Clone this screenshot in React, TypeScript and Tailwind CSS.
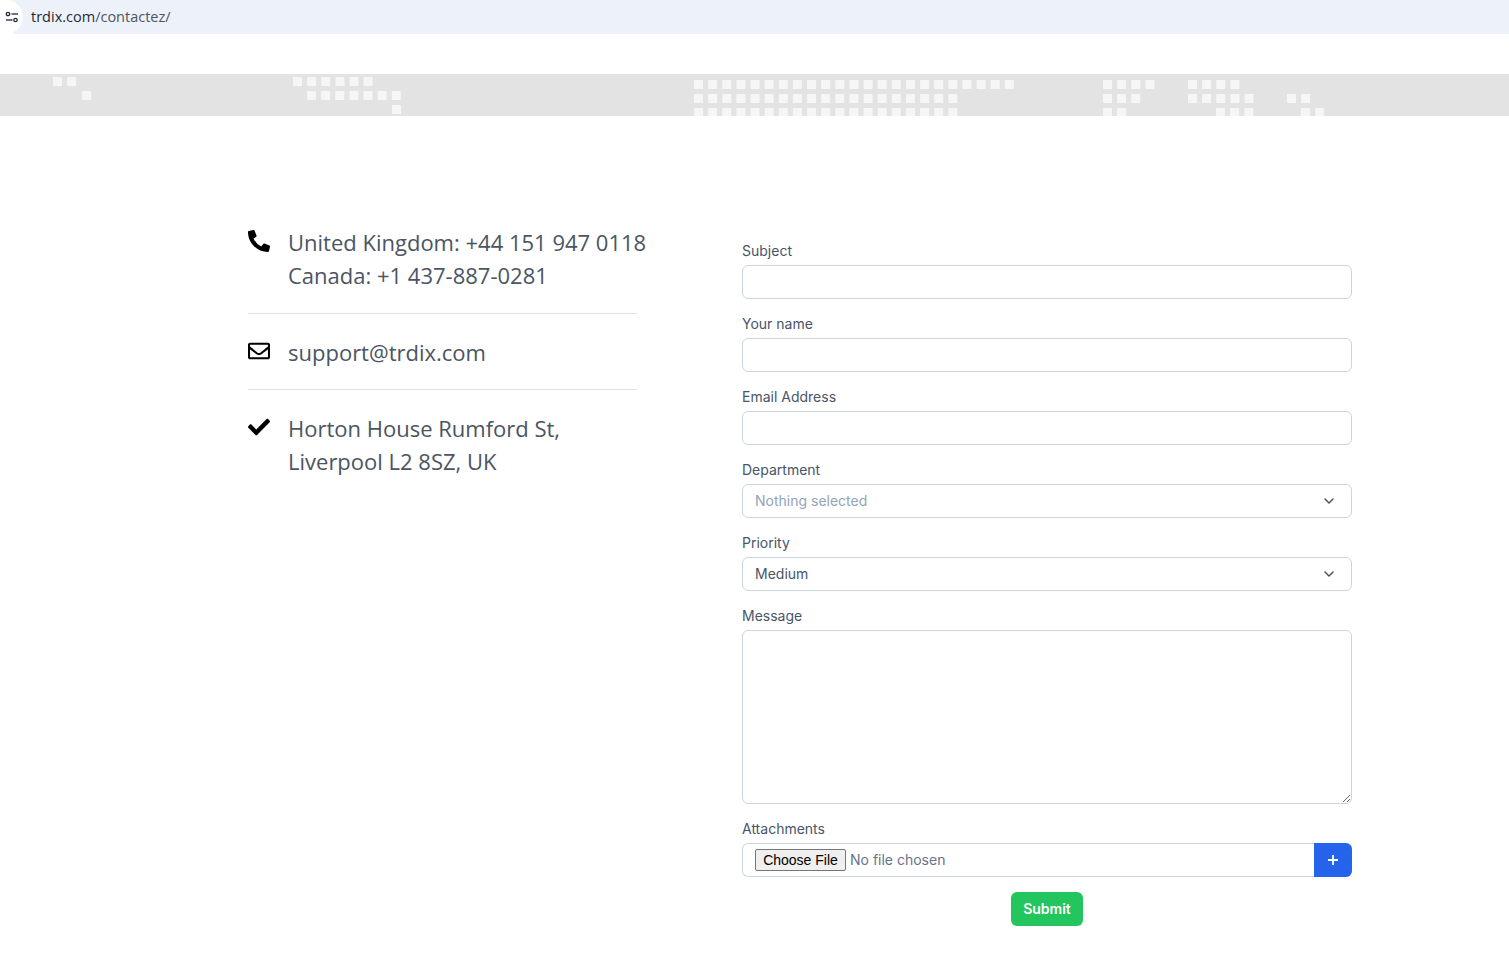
import { FaCheck, FaPhoneAlt, FaRegEnvelope } from 'react-icons/fa'

// banner pattern: [start x, y, number of squares]
const squareRuns: [number, number, number][] = [
  [53, 77, 2], [82, 91, 1],
  [293, 77, 6], [307, 91, 7], [392, 105, 1],
  [694, 80, 23], [694, 94, 19], [694, 108, 19],
  [1103, 80, 4], [1103, 94, 3], [1103, 108, 2],
  [1188, 80, 4], [1188, 94, 5], [1216, 108, 3],
  [1287, 94, 2], [1301, 108, 2],
]

const Banner = () => (
  <div className="h-[42px] bg-[#e3e3e3]">
    <svg width="1509" height="42" viewBox="0 74 1509 42" className="block">
      {squareRuns.map(([x, y, count]) =>
        Array.from({ length: count }, (_, i) => (
          <rect key={`${x}-${y}-${i}`} x={x + i * 14.13} y={y} width="9" height="9" rx="0.5" fill="#f6f6f6" />
        ))
      )}
    </svg>
  </div>
)

const AddressBar = () => (
  <div className="h-[34px] bg-[#edf2fa] flex items-center rounded-bl-[17px]">
    <div className="w-[23px] h-[34px] bg-white rounded-r-full flex items-center justify-center shrink-0">
      <svg width="14" height="12" viewBox="0 0 14 12" fill="none" stroke="#1f2937" strokeWidth="1.3">
        <circle cx="3" cy="3" r="1.7" />
        <path d="M6.5 3H13" />
        <path d="M1 9h6.5" />
        <circle cx="10.5" cy="9" r="1.7" />
      </svg>
    </div>
    <span className="ml-2 text-[14.5px] text-[#1f2937] font-['Open_Sans',sans-serif]">
      trdix.com<span className="text-[#4b5563]">/contactez/</span>
    </span>
  </div>
)

const Chevron = () => (
  <svg width="20" height="20" viewBox="0 0 20 20" fill="none" stroke="#4b5563" strokeWidth="1.5" strokeLinecap="round" strokeLinejoin="round">
    <path d="M6 8l4 4 4-4" />
  </svg>
)

const Field = ({ label, children }: { label: string; children: React.ReactNode }) => (
  <div className="mb-[15px]">
    <label className="block text-sm text-[#475569] mb-1">{label}</label>
    {children}
  </div>
)

const inputClass = 'block w-full h-[34px] bg-white border border-[#cbd5e1] rounded-md px-3 text-sm text-[#475569] focus:outline-none'

const SelectBox = ({ value, muted }: { value: string; muted?: boolean }) => (
  <button type="button" className={`${inputClass} flex items-center justify-between pr-[12px] text-left`}>
    <span className={muted ? 'text-[#94a3b8]' : 'text-[#475569]'}>{value}</span>
    <Chevron />
  </button>
)

const App = () => {
  return (
    <div className="min-h-[974px] bg-white font-['Inter',sans-serif]">
      <AddressBar />
      <div className="h-10" />
      <Banner />

      <div className="flex pl-[248px]">
        <div className="w-[389px] pt-[110px] font-['Open_Sans',sans-serif] text-[22px] leading-[33px] text-[#4b5563]">
          <div className="flex border-b border-[#e2e2e2] pb-[21px]">
            <FaPhoneAlt className="w-[22px] h-[22px] text-black mt-1 shrink-0" />
            <div className="ml-[18px] whitespace-nowrap">
              United Kingdom: +44 151 947 0118<br />
              Canada: +1 437-887-0281
            </div>
          </div>
          <div className="flex border-b border-[#e2e2e2] pt-[22px] pb-[20px]">
            <FaRegEnvelope className="w-[22px] h-[22px] text-black mt-1 shrink-0" />
            <div className="ml-[18px]">support@trdix.com</div>
          </div>
          <div className="flex pt-[22px]">
            <FaCheck className="w-[22px] h-[22px] text-black mt-1 shrink-0" />
            <div className="ml-[18px]">
              Horton House Rumford St,<br />
              Liverpool L2 8SZ, UK
            </div>
          </div>
        </div>

        <form className="w-[610px] ml-[105px] pt-[125px]">
          <Field label="Subject"><input type="text" className={inputClass} /></Field>
          <Field label="Your name"><input type="text" className={inputClass} /></Field>
          <Field label="Email Address"><input type="email" className={inputClass} /></Field>
          <Field label="Department"><SelectBox value="Nothing selected" muted /></Field>
          <Field label="Priority"><SelectBox value="Medium" /></Field>
          <Field label="Message">
            <textarea className="block w-full h-[174px] bg-white border border-[#cbd5e1] rounded-md px-3 py-2 text-sm focus:outline-none" />
          </Field>
          <Field label="Attachments">
            <div className="flex h-[34px]">
              <div className="flex-1 flex items-center border border-r-0 border-[#cbd5e1] rounded-l-md pl-3">
                <input
                  type="file"
                  className="w-full text-sm text-[#64748b] focus:outline-none file:font-['Liberation_Sans',sans-serif] file:text-sm file:text-black file:w-[91px] file:h-[22px] file:mr-1 file:bg-[#efefef] file:border file:border-[#767676] file:rounded-[2px]"
                />
              </div>
              <button type="button" className="w-[38px] bg-[#2563eb] rounded-r-md flex items-center justify-center">
                <svg width="12" height="12" viewBox="0 0 12 12" stroke="white" strokeWidth="1.8">
                  <path d="M6 1v10M1 6h10" />
                </svg>
              </button>
            </div>
          </Field>
          <div className="flex justify-center">
            <button type="submit" className="w-[72px] h-[34px] bg-[#22c55e] text-white text-sm font-semibold rounded-md">
              Submit
            </button>
          </div>
        </form>
      </div>
    </div>
  )
}

export default App
